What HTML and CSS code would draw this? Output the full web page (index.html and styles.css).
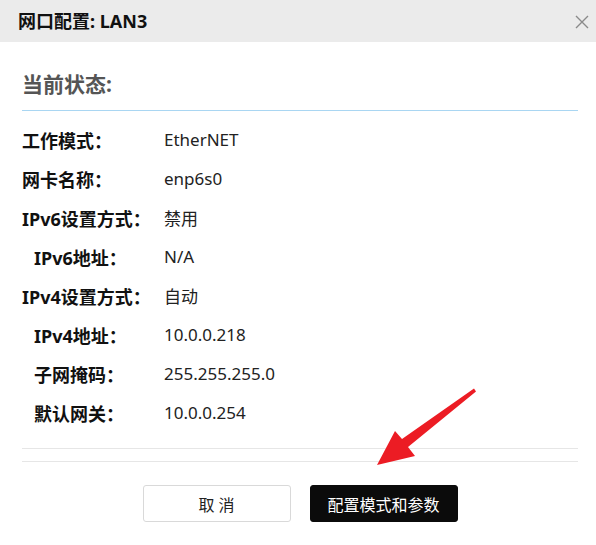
FILE: index.html
```html
<!DOCTYPE html>
<html lang="zh-CN">
<head>
    <meta charset="UTF-8">
    <title>网口配置</title>
    <link rel="stylesheet" href="styles.css">
</head>
<body>

    <div class="dialog">
        <!-- Title bar -->
        <div class="dialog-header">
            <span class="dialog-title">网口配置: LAN3</span>
            <svg class="close" width="16" height="16" viewBox="0 0 16 16">
                <path d="M2 2 L14 14 M14 2 L2 14" stroke="#8a8a8a" stroke-width="1.4" fill="none"/>
            </svg>
        </div>

        <div class="dialog-body">
            <h3 class="section-title">当前状态:</h3>

            <div class="info">
                <div class="row"><span class="label">工作模式：</span><span class="value">EtherNET</span></div>
                <div class="row"><span class="label">网卡名称：</span><span class="value">enp6s0</span></div>
                <div class="row"><span class="label">IPv6设置方式：</span><span class="value">禁用</span></div>
                <div class="row sub"><span class="label">IPv6地址：</span><span class="value">N/A</span></div>
                <div class="row"><span class="label">IPv4设置方式：</span><span class="value">自动</span></div>
                <div class="row sub"><span class="label">IPv4地址：</span><span class="value">10.0.0.218</span></div>
                <div class="row sub"><span class="label">子网掩码：</span><span class="value">255.255.255.0</span></div>
                <div class="row sub"><span class="label">默认网关：</span><span class="value">10.0.0.254</span></div>
            </div>

            <div class="divider"></div>
            <div class="divider second"></div>

            <div class="actions">
                <button class="btn btn-default">取 消</button>
                <button class="btn btn-dark">配置模式和参数</button>
            </div>
        </div>

        <!-- Pointer arrow -->
        <svg class="pointer" width="596" height="545" viewBox="0 0 596 545">
            <polygon points="377,465 395,431 402,439 474,388.5 476,391.5 408,447 415,456" fill="#ec1c24"/>
        </svg>
    </div>

</body>
</html>
```

FILE: styles.css
```css
/* Page */
body {
    margin: 0;
    font-family: "Noto Sans", "Noto Sans CJK SC", sans-serif;
    color: #1a1a1a;
    background: #fff;
}

.dialog {
    position: relative;
    width: 596px;
    height: 545px;
    overflow: hidden;
}

/* Title bar */
.dialog-header {
    height: 42px;
    box-sizing: border-box;
    background: #ebebeb;
    display: flex;
    align-items: center;
    justify-content: space-between;
    padding: 0 6px 3px 18px;
}

.dialog-title {
    font-size: 18px;
    font-weight: bold;
    color: #111;
}

.close {
    margin-top: 5px;
}

/* Body */
.dialog-body {
    padding: 0 18px 0 22px;
}

.section-title {
    margin: 0;
    padding: 29px 0 12px;
    font-size: 21px;
    font-weight: bold;
    color: #555;
    line-height: 27px;
    border-bottom: 1px solid #a9d6f2;
}

.info {
    padding-top: 9px;
    padding-bottom: 16px;
}

.row {
    display: flex;
    align-items: center;
    height: 39px;
}

.label {
    width: 142px;
    font-size: 18px;
    font-weight: bold;
    color: #111;
}

.row.sub .label {
    padding-left: 12px;
    width: 130px;
}

.value {
    font-size: 17px;
    color: #222;
}

.divider {
    height: 1px;
    background: #e6e6e6;
}

.divider.second {
    margin-top: 12px;
}

/* Buttons */
.actions {
    display: flex;
    justify-content: center;
    gap: 19px;
    padding-top: 23px;
}

.btn {
    width: 148px;
    height: 37px;
    font-family: "Noto Sans", "Noto Sans CJK SC", sans-serif;
    font-size: 16px;
    border-radius: 3px;
    cursor: pointer;
}

.btn-default {
    background: #fff;
    border: 1px solid #d9d9d9;
    color: #222;
}

.btn-dark {
    background: #0b0b0b;
    border: 1px solid #0b0b0b;
    color: #fff;
}

.pointer {
    position: absolute;
    top: 0;
    left: 0;
    pointer-events: none;
}
```
